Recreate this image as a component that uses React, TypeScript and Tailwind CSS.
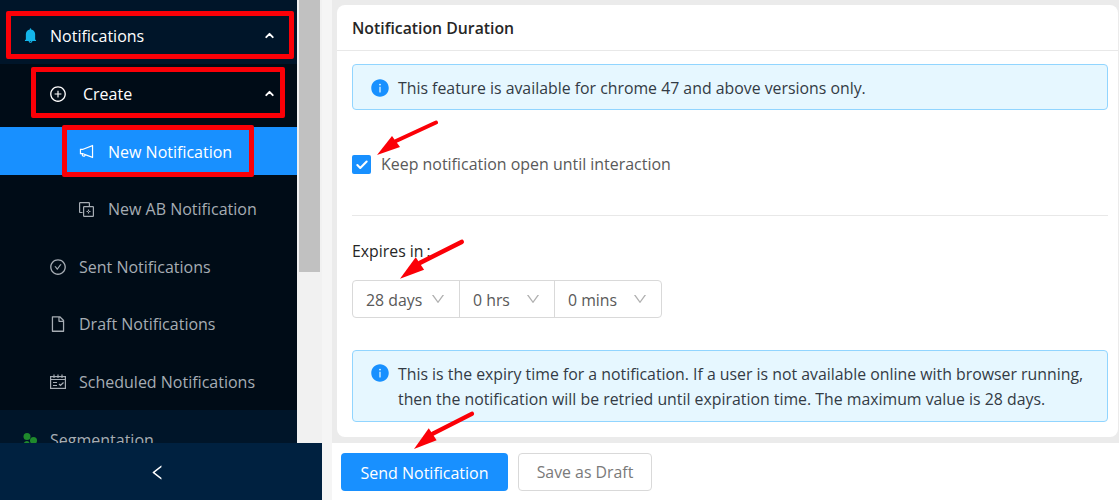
import type { ReactNode } from "react";
import { Check, ChevronUp } from "lucide-react";
import {
  AiFillBell,
  AiFillInfoCircle,
  AiOutlineCheckCircle,
  AiOutlineDown,
  AiOutlineFile,
  AiOutlineLeft,
  AiOutlineNotification,
  AiOutlinePlusCircle,
} from "react-icons/ai";

const font = { fontFamily: '"Open Sans", "Noto Sans", sans-serif' };

function SubItem({ icon, label }: { icon: ReactNode; label: string }) {
  return (
    <div className="flex h-[57.5px] items-center gap-[12px] pl-[49px] text-[16px] text-[#a6adb4]">
      {icon}
      <span>{label}</span>
    </div>
  );
}

function CalendarIcon() {
  return (
    <svg width="16" height="15" viewBox="0 0 16 15" fill="none" stroke="currentColor" strokeWidth="1.2" className="ml-[1px] mr-[1px]">
      <rect x="0.6" y="2.6" width="14.8" height="11.8" />
      <path d="M4 0.5v3.5M8 0.5v3.5M12 0.5v3.5M0.6 5.5h14.8M3 8.5h4M3 11.5h4M9 10l1.5 1.5 3-3" />
    </svg>
  );
}

function AbIcon() {
  return (
    <svg width="15" height="15" viewBox="0 0 15 15" fill="none" stroke="currentColor" strokeWidth="1.2">
      <path d="M3.5 10.5H1.2a.6.6 0 0 1-.6-.6V1.2a.6.6 0 0 1 .6-.6h8.6a.6.6 0 0 1 .6.6V4" />
      <rect x="4.6" y="4.6" width="9.8" height="9.8" rx="0.6" />
      <path d="M7.5 9.5h4M9.5 7.5v4" strokeDasharray="1.6 0.8" />
    </svg>
  );
}

function Arrow({ className }: { className: string }) {
  return (
    <svg className={`absolute ${className}`} viewBox="0 0 62 36" preserveAspectRatio="none">
      <path d="M59 2.5 19 21" stroke="#fb0007" strokeWidth="4" strokeLinecap="round" />
      <path d="M0 35 15 16 23 27Z" fill="#fb0007" />
    </svg>
  );
}

function TimeSelect({ label, width }: { label: string; width: string }) {
  return (
    <div className={`flex h-full items-center justify-between border-r border-[#d9d9d9] pl-[13px] pr-[13px] last:border-r-0 ${width}`}>
      <span className="pt-[5px]">{label}</span>
      <AiOutlineDown size={16} className="text-[#b0b0b0]" />
    </div>
  );
}

export default function App() {
  return (
    <div className="relative flex h-[500px] w-[1119px] overflow-hidden bg-white" style={font}>
      <aside className="flex h-full w-[322px] shrink-0 flex-col">
        <div className="flex min-h-0 flex-1">
          <nav className="w-[297px] overflow-hidden bg-[#000c17]">
            <div className="flex h-[64px] items-center justify-between bg-[#001529] pl-[22px] pr-[21px] pt-[7px] text-[16px] text-white">
              <div className="flex items-center gap-[11px]">
                <AiFillBell size={17} className="text-[#13b5ea]" />
                <span>Notifications</span>
              </div>
              <ChevronUp size={13} strokeWidth={3.5} />
            </div>
            <div className="flex h-[63px] items-center justify-between pb-[4px] pl-[49px] pr-[21px] text-[16px] text-white">
              <div className="flex items-center gap-[16px]">
                <AiOutlinePlusCircle size={18} />
                <span>Create</span>
              </div>
              <ChevronUp size={13} strokeWidth={3.5} />
            </div>
            <div className="flex h-[48px] items-center gap-[13px] bg-[#1890ff] pl-[78px] text-[16px] text-white">
              <AiOutlineNotification size={17} />
              <span className="pt-[2px]">New Notification</span>
            </div>
            <div className="flex h-[63px] items-center gap-[14px] pl-[79px] pt-[5px] text-[16px] text-[#a6adb4]">
              <AbIcon />
              <span>New AB Notification</span>
            </div>
            <SubItem icon={<AiOutlineCheckCircle size={18} />} label="Sent Notifications" />
            <SubItem icon={<AiOutlineFile size={18} />} label="Draft Notifications" />
            <SubItem icon={<CalendarIcon />} label="Scheduled Notifications" />
            <div className="-mt-[0.5px] flex h-[60px] items-center gap-[13px] bg-[#001529] pl-[23px] text-[16px] text-[#a6adb4]">
              <svg width="14" height="14" viewBox="0 0 14 14" fill="#1f8a2c">
                <circle cx="4" cy="3.5" r="3.5" />
                <circle cx="10.5" cy="7.5" r="3.5" />
                <path d="M0 13c0-3 2-5 4-5s3 2 3 5z" />
              </svg>
              <span>Segmentation</span>
            </div>
          </nav>
          <div className="flex-1 bg-[#f1f1f1] pl-[2px] pr-[2px]">
            <div className="h-[272px] bg-[#c1c1c1]" />
          </div>
        </div>
        <div className="flex h-[57px] shrink-0 items-center justify-center bg-[#002140] pr-[8px] pt-[2px] text-white">
          <AiOutlineLeft size={19} />
        </div>
      </aside>

      <div className="w-[10px] shrink-0 bg-[#f5f5f5]" />

      <main className="flex min-w-0 flex-1 flex-col">
        <div className="flex-1 bg-[#ebebeb] pl-[5px] pt-[5px]">
          <section className="h-[432px] w-[781px] rounded-[8px] bg-white">
            <h2 className="flex h-[46px] items-center border-b border-[#e8e8e8] pl-[15px] pt-[2px] text-[15.8px] font-semibold text-[#262626]">
              Notification Duration
            </h2>
            <div className="pl-[15px] pr-[10px] pt-[13px]">
              <div className="flex h-[46px] items-center gap-[8px] rounded-[4px] border border-[#91d5ff] bg-[#e6f7ff] pl-[17px] pt-[2px] text-[15.85px] text-[#333b45]">
                <AiFillInfoCircle size={20} className="text-[#1890ff]" />
                <span className="pt-[2px]">This feature is available for chrome 47 and above versions only.</span>
              </div>
              <label className="mt-[43px] flex items-center gap-[10px] text-[15.95px] text-[#595959]">
                <span className="flex h-[19px] w-[19px] items-center justify-center rounded-[2px] bg-[#1890ff] text-white">
                  <Check size={14} strokeWidth={3.5} />
                </span>
                Keep notification open until interaction
              </label>
              <div className="mt-[38px] h-px bg-[#e8e8e8]" />
              <div className="mt-[24px] text-[15.85px] text-[#262626]">
                Expires in<span className="ml-[3px]">:</span>
              </div>
              <div className="mt-[16px] flex h-[38px] w-[310px] items-center rounded-[4px] border border-[#d9d9d9] text-[15.85px] text-[#595959]">
                <TimeSelect label="28 days" width="w-[107px]" />
                <TimeSelect label="0 hrs" width="w-[95px]" />
                <TimeSelect label="0 mins" width="w-[106px]" />
              </div>
              <div className="mt-[32px] flex h-[72px] gap-[8px] rounded-[4px] border border-[#91d5ff] bg-[#e6f7ff] pl-[17px] pt-[11px] text-[15.85px] leading-[25px] text-[#333b45]">
                <AiFillInfoCircle size={20} className="mt-[1px] shrink-0 text-[#1890ff]" />
                <p>
                  This is the expiry time for a notification. If a user is not available online with browser running,
                  <br />
                  then the notification will be retried until expiration time. The maximum value is 28 days.
                </p>
              </div>
            </div>
          </section>
        </div>
        <footer className="flex h-[57px] shrink-0 items-center gap-[10px] bg-white pl-[9px]">
          <button className="flex h-[38px] w-[167px] items-center justify-center rounded-[4px] bg-[#1890ff] pt-[3px] text-[16px] text-white">
            Send Notification
          </button>
          <button className="flex h-[38px] w-[134px] items-center justify-center rounded-[4px] border border-[#d9d9d9] pt-[3px] text-[15.85px] text-[#7a7a7a]">
            Save as Draft
          </button>
        </footer>
      </main>

      <div className="absolute left-[6px] top-[11px] h-[48px] w-[288px] rounded-[2px] border-[5px] border-[#fb0007]" />
      <div className="absolute left-[31px] top-[67px] h-[51px] w-[254px] rounded-[2px] border-[5px] border-[#fb0007]" />
      <div className="absolute left-[62px] top-[125px] h-[52px] w-[192px] rounded-[2px] border-[5px] border-[#fb0007]" />
      <Arrow className="left-[377px] top-[120px] h-[36px] w-[62px]" />
      <Arrow className="left-[400px] top-[239px] h-[41px] w-[65px]" />
      <Arrow className="left-[414px] top-[411px] h-[39px] w-[61px]" />
    </div>
  );
}
